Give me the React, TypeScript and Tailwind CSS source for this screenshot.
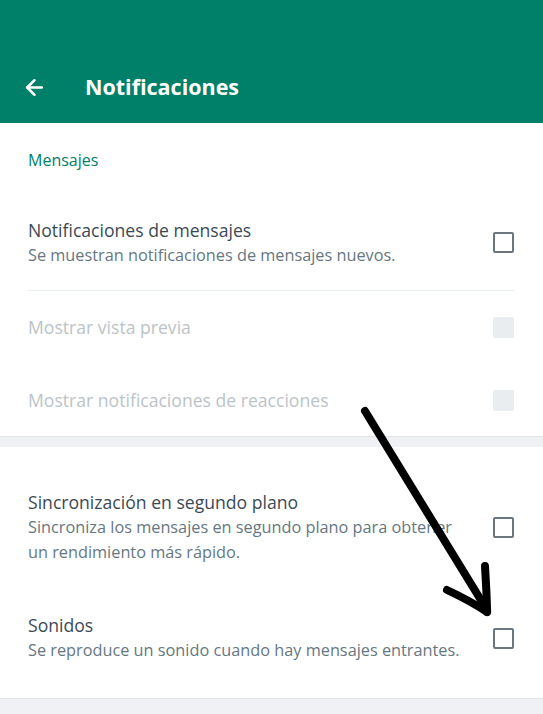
import { ArrowLeft } from "lucide-react";

type Item = {
  title: string;
  desc?: string;
  disabled?: boolean;
};

function Checkbox({ disabled }: { disabled?: boolean }) {
  if (disabled) {
    return <div className="h-[21px] w-[21px] shrink-0 rounded-[2px] bg-[#e9edef]" />;
  }
  return <div className="h-[21px] w-[21px] shrink-0 rounded-[2px] border-2 border-[#6b7780]" />;
}

function Row({ item, className }: { item: Item; className?: string }) {
  return (
    <div className={"flex items-center justify-between pl-[28px] pr-[29px] " + (className ?? "")}>
      <div className="pr-6">
        <div
          className={
            "text-[17.6px] leading-[25px] " + (item.disabled ? "text-[#bcc3c8]" : "text-[#3b4a54]")
          }
        >
          {item.title}
        </div>
        {item.desc && <div className="text-[16.3px] leading-[25px] text-[#667781]">{item.desc}</div>}
      </div>
      <Checkbox disabled={item.disabled} />
    </div>
  );
}

export default function App() {
  return (
    <div
      className="relative h-[714px] w-[543px] overflow-hidden bg-white"
      style={{ fontFamily: '"Open Sans", "Noto Sans", sans-serif' }}
    >
      {/* header */}
      <div className="h-[123px] bg-[#008069] pt-[64px]">
        <div className="flex h-[46px] items-center">
          <ArrowLeft className="ml-[22px] h-[25px] w-[25px] text-white" strokeWidth={2.4} />
          <span className="ml-[38px] text-[21.5px] font-bold text-white">Notificaciones</span>
        </div>
      </div>

      {/* mensajes */}
      <div className="h-[72px] pl-[28px] pt-[26px] text-[16px] leading-[22px] text-[#008069]">Mensajes</div>
      <Row
        className="h-[95px]"
        item={{ title: "Notificaciones de mensajes", desc: "Se muestran notificaciones de mensajes nuevos." }}
      />
      <div className="ml-[28px] mr-[29px] h-px bg-[#e9edef]" />
      <Row className="h-[73px]" item={{ title: "Mostrar vista previa", disabled: true }} />
      <Row className="h-[72px]" item={{ title: "Mostrar notificaciones de reacciones", disabled: true }} />

      <div className="h-[11px] border-t border-[#e3e4e8] bg-[#f0f1f5]" />

      <Row
        className="pt-[43px] pb-[23px]"
        item={{
          title: "Sincronización en segundo plano",
          desc: "Sincroniza los mensajes en segundo plano para obtener un rendimiento más rápido.",
        }}
      />
      <Row
        className="pt-[25px] pb-[35px]"
        item={{ title: "Sonidos", desc: "Se reproduce un sonido cuando hay mensajes entrantes." }}
      />
      <div className="h-[20px] border-t border-[#e3e4e8] bg-[#f0f1f5]" />

      {/* hand-drawn arrow */}
      <svg className="pointer-events-none absolute left-0 top-0" width="543" height="714" viewBox="0 0 543 714">
        <g stroke="#000" strokeWidth="8" strokeLinecap="round" strokeLinejoin="round" fill="none">
          <path d="M365 411 L487 610" />
          <path d="M485 566 C486 585 487 598 487 612" />
          <path d="M447 590 C462 597 475 604 487 612" />
        </g>
      </svg>
    </div>
  );
}
